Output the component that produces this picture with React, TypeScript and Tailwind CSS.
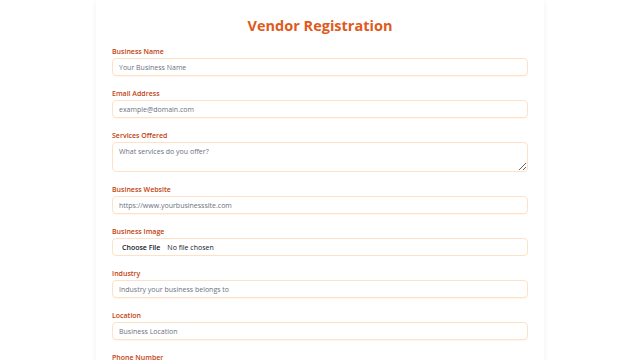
import React from "react";

const font = { fontFamily: '"Open Sans", "Noto Sans", sans-serif' };

function Label({ children }: { children: React.ReactNode }) {
  return (
    <div className="text-[7px] leading-[9px] font-semibold text-[#c2410c] mb-[2px]">{children}</div>
  );
}

const inputCls =
  "block w-full h-[18px] rounded-[4px] border border-[#fde2c8] bg-white px-[6px] text-[7px] text-gray-700 placeholder:text-[#6b7280] outline-none shadow-[0_1px_1px_rgba(251,146,60,0.08)]";

export default function App() {
  return (
    <div className="min-h-[360px] bg-white flex justify-center leading-none" style={font}>
      <div className="w-[448px] bg-white shadow-[0_0_6px_rgba(0,0,0,0.06)] px-4 pt-[16px] pb-6">
        <h1 className="text-center text-[14.5px] leading-[20px] font-bold text-[#e05a1c] mb-[11px]">
          Vendor Registration
        </h1>
        <div className="flex flex-col gap-[13px]">
          <div>
            <Label>Business Name</Label>
            <input className={inputCls} placeholder="Your Business Name" />
          </div>
          <div>
            <Label>Email Address</Label>
            <input className={inputCls} placeholder="example@domain.com" />
          </div>
          <div>
            <Label>Services Offered</Label>
            <textarea
              className="block w-full h-[30px] rounded-[4px] border border-[#fde2c8] bg-white px-[6px] py-[4px] text-[7px] leading-[9px] text-gray-700 placeholder:text-[#6b7280] outline-none"
              placeholder="What services do you offer?"
            />
          </div>
          <div>
            <Label>Business Website</Label>
            <input className={inputCls} placeholder="https://www.yourbusinesssite.com" />
          </div>
          <div>
            <Label>Business Image</Label>
            <div className="w-full h-[18px] rounded-[4px] border border-[#fde2c8] bg-white px-[9px] flex items-center text-[7px] text-[#111827]">
              <span className="font-semibold mr-[7px]">Choose File</span>
              <span>No file chosen</span>
            </div>
          </div>
          <div>
            <Label>Industry</Label>
            <input className={inputCls} placeholder="Industry your business belongs to" />
          </div>
          <div>
            <Label>Location</Label>
            <input className={inputCls} placeholder="Business Location" />
          </div>
          <div>
            <Label>Phone Number</Label>
            <input className={inputCls} placeholder="Your Phone Number" />
          </div>
        </div>
      </div>
    </div>
  );
}
